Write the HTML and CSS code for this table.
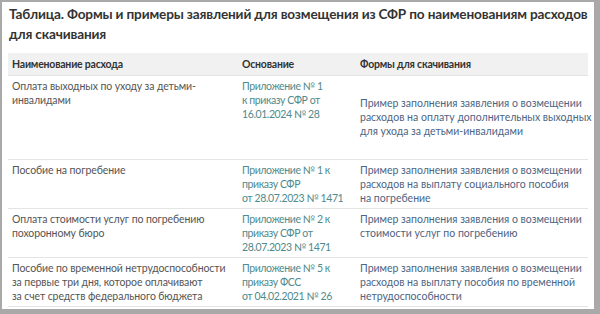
FILE: index.html
```html
<!DOCTYPE html>
<html lang="ru">
<head>
<meta charset="utf-8">
<link rel="stylesheet" href="styles.css">
</head>
<body>
<div class="frame">
  <h1 class="title">Таблица. Формы и примеры заявлений для возмещения из СФР по наименованиям расходов<br>для скачивания</h1>
  <table class="tbl">
    <colgroup><col class="c1"><col class="c2"><col class="c3"></colgroup>
    <thead>
      <tr><th>Наименование расхода</th><th>Основание</th><th>Формы для скачивания</th></tr>
    </thead>
    <tbody>
      <tr>
        <td class="name">Оплата выходных по уходу за детьми-<br>инвалидами</td>
        <td class="base">Приложение № 1<br>к приказу СФР от<br>16.01.2024 № 28</td>
        <td class="form form-mid">Пример заполнения заявления о возмещении<br>расходов на оплату дополнительных выходных<br>для ухода за детьми-инвалидами</td>
      </tr>
      <tr>
        <td class="name">Пособие на погребение</td>
        <td class="base">Приложение № 1 к<br>приказу СФР<br>от 28.07.2023 № 1471</td>
        <td class="form">Пример заполнения заявления о возмещении<br>расходов на выплату социального пособия<br>на погребение</td>
      </tr>
      <tr>
        <td class="name">Оплата стоимости услуг по погребению<br>похоронному бюро</td>
        <td class="base">Приложение № 2 к<br>приказу СФР от<br>28.07.2023 № 1471</td>
        <td class="form">Пример заполнения заявления о возмещении<br>стоимости услуг по погребению</td>
      </tr>
      <tr>
        <td class="name">Пособие по временной нетрудоспособности<br>за первые три дня, которое оплачивают<br>за счет средств федерального бюджета</td>
        <td class="base">Приложение № 5 к<br>приказу ФСС<br>от 04.02.2021 № 26</td>
        <td class="form">Пример заполнения заявления о возмещении<br>расходов на выплату пособия по временной<br>нетрудоспособности</td>
      </tr>
    </tbody>
  </table>
</div>
</body>
</html>
```

FILE: styles.css
```css
html, body {
  margin: 0;
  padding: 0;
  background: #ffffff;
}
.frame {
  box-sizing: border-box;
  width: 600px;
  height: 314px;
  border-style: solid;
  border-color: #a9a9a9;
  border-width: 2px 6px 5px 2px;
  background: #ffffff;
  padding: 2px 0 0 6px;
  font-family: Lato, "Liberation Sans", sans-serif;
  overflow: hidden;
}
.title {
  margin: 0 0 9px 1px;
  font-size: 13.6px;
  line-height: 20px;
  font-weight: 700;
  color: #333333;
  letter-spacing: -0.15px;
  white-space: nowrap;
}
.tbl {
  border-collapse: collapse;
  table-layout: fixed;
  width: 580px;
  font-size: 10.5px;
  line-height: 14px;
}
.c1 { width: 230px; }
.c2 { width: 118px; }
.c3 { width: 232px; }
.tbl th {
  background: #f1f1f1;
  color: #333333;
  font-weight: 700;
  text-align: left;
  height: 22px;
  padding: 0 4px;
  border-bottom: 1px solid #e4e4e4;
  vertical-align: middle;
  white-space: nowrap;
  letter-spacing: -0.2px;
}
.tbl td {
  padding: 3px 4px 3px;
  vertical-align: top;
  border-bottom: 1px solid #e4e4e4;
  white-space: nowrap;
}
.tbl td.name {
  color: #555555;
  letter-spacing: -0.1px;
}
.tbl td.base {
  color: #4f8a8c;
  letter-spacing: -0.4px;
}
.tbl td.form {
  color: #4d6583;
  letter-spacing: 0;
}
.tbl td.form-mid {
  padding-top: 20px;
  padding-bottom: 21px;
}
```
